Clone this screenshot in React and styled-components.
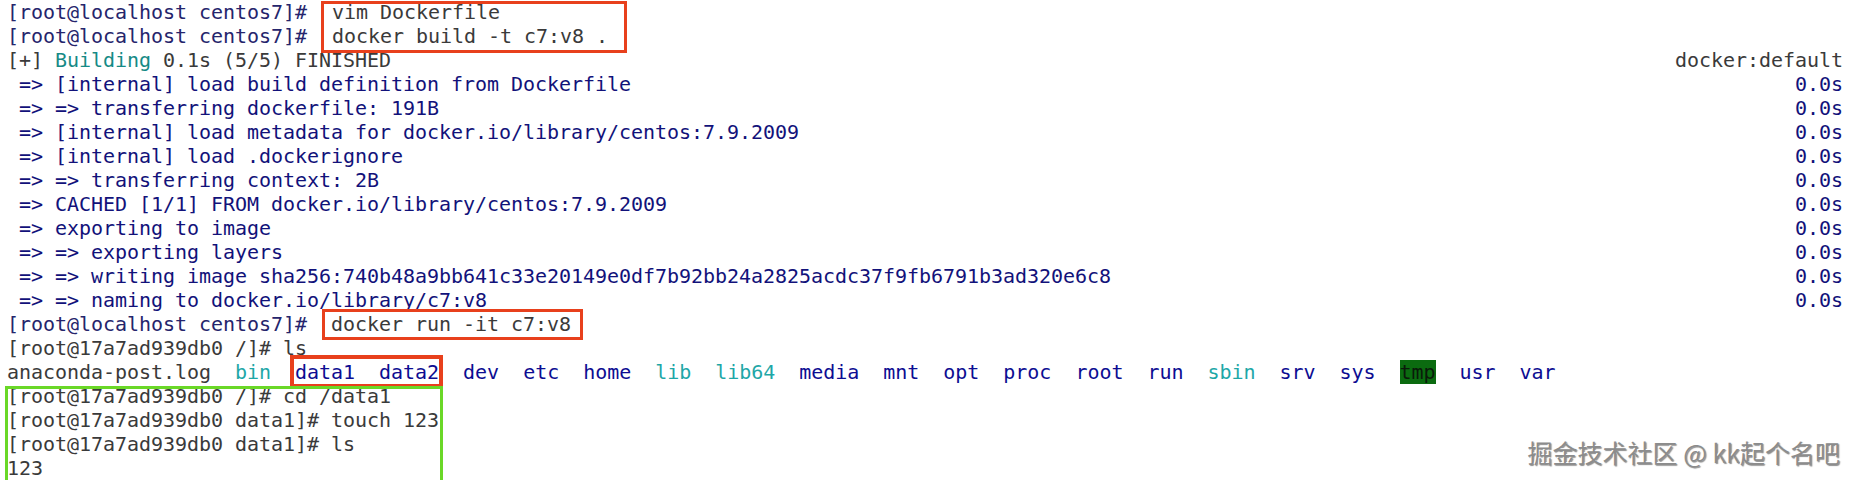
import React from 'react';
import styled, {createGlobalStyle} from 'styled-components';

const tones = {
  prompt: '#25256c',
  text: '#3a3a3a',
  navy: '#12127a',
  teal: '#168a86',
  cyan: '#1ea7a7',
  dir: '#0d0d92',
};

const steps = [
  ' => [internal] load build definition from Dockerfile',
  ' => => transferring dockerfile: 191B',
  ' => [internal] load metadata for docker.io/library/centos:7.9.2009',
  ' => [internal] load .dockerignore',
  ' => => transferring context: 2B',
  ' => CACHED [1/1] FROM docker.io/library/centos:7.9.2009',
  ' => exporting to image',
  ' => => exporting layers',
  ' => => writing image sha256:740b48a9bb641c33e20149e0df7b92bb24a2825acdc37f9fb6791b3ad320e6c8',
  ' => => naming to docker.io/library/c7:v8',
];

const listing = [
  ['anaconda-post.log', 'text'],
  ['bin', 'cyan'],
  ['data1', 'dir', 'box'],
  ['data2', 'dir', 'box'],
  ['dev', 'dir'],
  ['etc', 'dir'],
  ['home', 'dir'],
  ['lib', 'cyan'],
  ['lib64', 'cyan'],
  ['media', 'dir'],
  ['mnt', 'dir'],
  ['opt', 'dir'],
  ['proc', 'dir'],
  ['root', 'dir'],
  ['run', 'dir'],
  ['sbin', 'cyan'],
  ['srv', 'dir'],
  ['sys', 'dir'],
  ['tmp', 'text', 'sticky'],
  ['usr', 'dir'],
  ['var', 'dir'],
];

export default function App() {
  const before = listing.slice(0, 2);
  const after = listing.slice(4);

  return (
    <>
      <GlobalStyle/>
      <Terminal>
        <PromptGroup>
          <Text $tone="prompt">[root@localhost centos7]#</Text>
          <Text $tone="prompt">[root@localhost centos7]#</Text>
          <CommandBox>
            <Text $tone="text">vim Dockerfile</Text>
            <Text $tone="text">docker build -t c7:v8 .</Text>
          </CommandBox>
        </PromptGroup>

        <Line>
          <span>
            <Text $tone="text">[+] </Text>
            <Text $tone="teal">Building</Text>
            <Text $tone="text"> 0.1s (5/5) FINISHED</Text>
          </span>
          <Text $tone="text">docker:default</Text>
        </Line>

        {steps.map(step => (
          <Line key={step}>
            <Text $tone="navy">{step}</Text>
            <Text $tone="navy">0.0s</Text>
          </Line>
        ))}

        <Line>
          <span>
            <Text $tone="prompt">[root@localhost centos7]#  </Text>
            <Marked $left={9} $right={12} $top={3} $bottom={4}>
              <Text $tone="text">docker run -it c7:v8</Text>
            </Marked>
          </span>
        </Line>
        <Line>
          <Text $tone="text">[root@17a7ad939db0 /]# ls</Text>
        </Line>
        <Line>
          <span>
            {before.map(([name, tone]) => (
              <Text key={name} $tone={tone}>{name}  </Text>
            ))}
            <Marked $left={5} $right={4} $top={5} $bottom={4} $thick>
              <Text $tone="dir">data1  data2</Text>
            </Marked>
            {after.map(([name, tone, kind]) => (
              <React.Fragment key={name}>
                <Text $tone="text">  </Text>
                {kind === 'sticky'
                  ? <Sticky>{name}</Sticky>
                  : <Text $tone={tone}>{name}</Text>}
              </React.Fragment>
            ))}
          </span>
        </Line>

        <GreenBlock>
          <Line><Text $tone="text">[root@17a7ad939db0 /]# cd /data1</Text></Line>
          <Line><Text $tone="text">[root@17a7ad939db0 data1]# touch 123</Text></Line>
          <Line><Text $tone="text">[root@17a7ad939db0 data1]# ls</Text></Line>
          <Line><Text $tone="text">123</Text></Line>
        </GreenBlock>
      </Terminal>
      <Watermark>掘金技术社区 @ kk起个名吧</Watermark>
    </>
  );
}

const GlobalStyle = createGlobalStyle`
  html, body {
    margin: 0;
    padding: 0;
    background: #ffffff;
  }
  body {
    width: 1857px;
    height: 480px;
    overflow: hidden;
    position: relative;
  }
`;

const Terminal = styled.div`
  padding: 0 0 0 7px;
  font-family: 'DejaVu Sans Mono', 'Liberation Mono', monospace;
  font-size: 20px;
  letter-spacing: -0.04px;
  line-height: 24px;
  color: ${tones.text};
  white-space: pre;
`;

const Line = styled.div`
  display: flex;
  justify-content: space-between;
  width: 1836px;
  height: 24px;
`;

const Text = styled.span`
  color: ${p => tones[p.$tone] || tones.text};
`;

const PromptGroup = styled.div`
  display: grid;
  grid-template-columns: 325px auto;
  grid-template-rows: 24px 24px;
  justify-content: start;

  & > span:nth-child(1) { grid-row: 1; grid-column: 1; }
  & > span:nth-child(2) { grid-row: 2; grid-column: 1; }
`;

const CommandBox = styled.div`
  grid-column: 2;
  grid-row: 1 / span 2;
  display: flex;
  flex-direction: column;
  position: relative;

  &::after {
    content: '';
    position: absolute;
    left: -11px;
    right: -19px;
    top: 1px;
    bottom: -5px;
    border: 3px solid #e8401c;
    pointer-events: none;
  }
`;

const Marked = styled.span`
  position: relative;

  &::after {
    content: '';
    position: absolute;
    left: -${p => p.$left}px;
    right: -${p => p.$right}px;
    top: -${p => p.$top}px;
    bottom: -${p => p.$bottom}px;
    border: ${p => (p.$thick ? 4 : 3)}px solid #e8401c;
    pointer-events: none;
  }
`;

const Sticky = styled.span`
  background: #0b6b10;
  color: #0a1a0a;
`;

const GreenBlock = styled.div`
  position: relative;
  width: fit-content;

  & > div {
    width: auto;
  }

  &::after {
    content: '';
    position: absolute;
    left: -2px;
    right: -4px;
    top: 2px;
    bottom: -4px;
    border: 3px solid #6ad827;
    pointer-events: none;
  }
`;

const Watermark = styled.div`
  position: absolute;
  right: 17px;
  bottom: 14px;
  font-family: 'Noto Sans CJK SC', 'Liberation Sans', sans-serif;
  font-size: 25px;
  line-height: 28px;
  color: #8c8c8c;
  text-shadow: -1px -1px 0 #ffffff, 1px 1px 1px rgba(0, 0, 0, 0.45);
  white-space: nowrap;
`;
